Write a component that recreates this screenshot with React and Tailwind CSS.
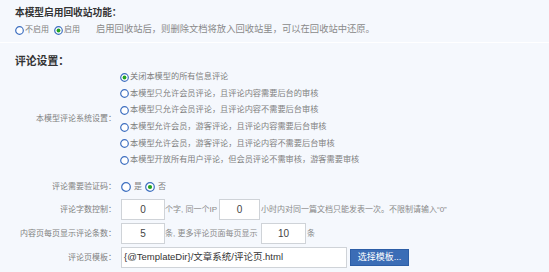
import React from "react";

const FONT = { fontFamily: '"Liberation Sans", "Noto Sans CJK SC", sans-serif' };

function Radio({ checked = false, size = 9 }) {
  const r = size / 2;
  return (
    <svg width={size} height={size} viewBox={`0 0 ${size} ${size}`} className="shrink-0">
      <circle cx={r} cy={r} r={r - 0.7} fill="#fff" stroke="#3d6fc0" strokeWidth="1.2" />
      {checked && <circle cx={r} cy={r} r={r * 0.42} fill="#22a322" />}
    </svg>
  );
}

const options = [
  { text: "关闭本模型的所有信息评论", checked: true },
  { text: "本模型只允许会员评论，且评论内容需要后台的审核" },
  { text: "本模型只允许会员评论，且评论内容不需要后台审核" },
  { text: "本模型允许会员，游客评论，且评论内容需要后台审核" },
  { text: "本模型允许会员，游客评论，且评论内容不需要后台审核" },
  { text: "本模型开放所有用户评论，但会员评论不需审核，游客需要审核" },
];

function Label({ children }) {
  return (
    <div className="w-[118px] shrink-0 text-right pr-[2px] text-[8px] text-[#808080]">{children}</div>
  );
}

function NumInput({ value, w = "w-[44px]" }) {
  return (
    <div className={`${w} h-[21px] shrink-0 bg-white border border-[#cfd3d8] flex items-center justify-center text-[10px] text-[#444]`}>
      {value}
    </div>
  );
}

export default function App() {
  return (
    <div className="w-[549px] h-[272px] bg-[#f5f8fd] overflow-hidden text-[#666]" style={FONT}>
      <div className="h-[43px] pl-[15px] pt-[7px] border-b border-white">
        <div className="h-[12px] leading-[12px] text-[9.7px] font-bold text-[#333]">本模型启用回收站功能：</div>
        <div className="mt-[4px] h-[14px] flex items-center text-[8px] text-[#808080]">
          <Radio />
          <span className="ml-[1px]">不启用</span>
          <span className="ml-[5px]"><Radio checked /></span>
          <span className="ml-[1px]">启用</span>
          <span className="ml-[16px] text-[9.3px] text-[#8a8a8a]">启用回收站后，则删除文档将放入回收站里，可以在回收站中还原。</span>
        </div>
      </div>

      <div className="h-[26px] pl-[15px] flex items-end">
        <div className="text-[10.8px] font-bold text-[#333] leading-[14px] pb-[1px]">评论设置：</div>
      </div>

      <div className="flex items-center">
        <Label>本模型评论系统设置：</Label>
        <div className="pl-[2px] flex flex-col">
          {options.map((o, i) => (
            <div key={i} className="h-[16.6px] flex items-center text-[8.2px] text-[#808080]">
              <Radio checked={o.checked} />
              <span className="ml-[1px]">{o.text}</span>
            </div>
          ))}
        </div>
      </div>

      <div className="mt-[7px] h-[22px] flex items-center">
        <Label>评论需要验证码：</Label>
        <div className="pl-[3px] flex items-center text-[8px] text-[#808080]">
          <Radio size={10} />
          <span className="ml-[3px]">是</span>
          <span className="ml-[3px]"><Radio checked size={10} /></span>
          <span className="ml-[3px]">否</span>
        </div>
      </div>

      <div className="h-[24px] flex items-center">
        <Label>评论字数控制：</Label>
        <div className="pl-[3px] flex items-center text-[8px] text-[#8a8a8a]">
          <NumInput value="0" />
          <span className="w-[54px] whitespace-nowrap">个字, 同一个IP</span>
          <NumInput value="0" w="w-[41px]" />
          <span className="ml-[1px] whitespace-nowrap">小时内对同一篇文档只能发表一次。不限制请输入“0”</span>
        </div>
      </div>

      <div className="h-[24px] flex items-center">
        <Label>内容页每页显示评论条数：</Label>
        <div className="pl-[3px] flex items-center text-[8px] text-[#8a8a8a]">
          <NumInput value="5" />
          <span className="w-[96px] whitespace-nowrap">条, 更多评论页面每页显示</span>
          <NumInput value="10" w="w-[45px]" />
          <span className="ml-[1px]">条</span>
        </div>
      </div>

      <div className="h-[24px] flex items-center">
        <Label>评论页模板：</Label>
        <div className="pl-[3px] flex items-center">
          <div className="w-[226px] h-[21px] bg-white border border-[#cfd3d8] flex items-center pl-[2px] text-[9.5px] text-[#333] whitespace-nowrap">
            {"{@TemplateDir}/文章系统/评论页.html"}
          </div>
          <div className="ml-[3px] w-[59px] h-[17px] bg-[#3b6db6] border border-[#2d5ea6] flex items-center justify-center text-[9px] text-white">
            选择模板...
          </div>
        </div>
      </div>
    </div>
  );
}
